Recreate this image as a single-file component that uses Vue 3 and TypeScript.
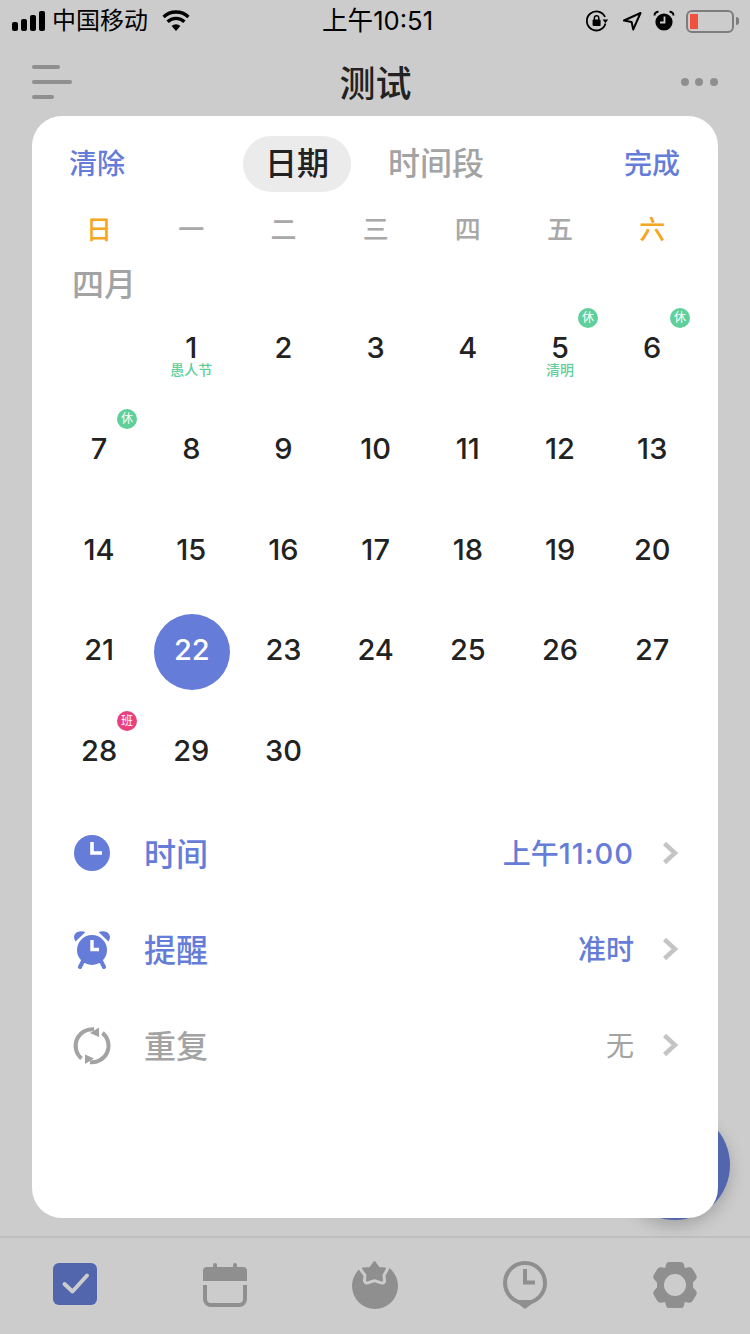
<script setup lang="ts">
interface Day {
  n: number;
  note?: string;
  badge?: "休" | "班";
}

const weekdays = ["日", "一", "二", "三", "四", "五", "六"];

const notes: Record<number, string> = { 1: "愚人节", 5: "清明" };
const badges: Record<number, "休" | "班"> = { 5: "休", 6: "休", 7: "休", 28: "班" };

const days: Day[] = [];
for (let n = 1; n <= 30; n++) {
  days.push({ n, note: notes[n], badge: badges[n] });
}

const selected = 22;
</script>

<template>
  <div class="page">
    <!-- status bar -->
    <div class="status">
      <div class="status-left">
        <div class="signal"><i class="b1"></i><i class="b2"></i><i class="b3"></i><i class="b4"></i></div>
        <span class="carrier">中国移动</span>
        <svg class="wifi" width="28" height="22" viewBox="0 0 28 22">
          <path d="M14 21l-4.4-5a6.4 6.4 0 0 1 8.8 0z" fill="#000" />
          <path d="M5.6 11.8a12 12 0 0 1 16.8 0M1.6 7a18 18 0 0 1 24.8 0" fill="none" stroke="#000" stroke-width="3.4" />
        </svg>
      </div>
      <div class="clock">上午10:51</div>
      <div class="status-right">
        <svg width="24" height="24" viewBox="0 0 24 24">
          <path d="M20.5 14.5A9.5 9.5 0 1 1 20 8" fill="none" stroke="#000" stroke-width="1.8" />
          <path d="M17.6 10.6h5.6l-2.8 3.6z" fill="#000" />
          <rect x="7.6" y="10.6" width="8" height="6.4" rx="1" fill="#000" />
          <path d="M9.4 11V9a2.2 2.2 0 0 1 4.4 0v2" fill="none" stroke="#000" stroke-width="1.5" />
        </svg>
        <svg class="loc" width="20" height="20" viewBox="0 0 20 20">
          <path d="M18.5 2L2 9.5l7.6 1.4 1.6 7.6z" fill="none" stroke="#000" stroke-width="2" stroke-linejoin="round" />
        </svg>
        <svg class="alarm" width="22" height="22" viewBox="0 0 22 22">
          <circle cx="11" cy="12" r="8.6" fill="#000" />
          <path d="M1.5 5.5A4 4 0 0 1 5.5 1.8M20.5 5.5A4 4 0 0 0 16.5 1.8" fill="none" stroke="#000" stroke-width="2" />
          <path d="M11.5 6.5v6H7" fill="none" stroke="#ccc" stroke-width="1.8" />
        </svg>
        <div class="battery"><div class="level"></div></div>
        <div class="nub"></div>
      </div>
    </div>

    <!-- nav -->
    <div class="nav">
      <div class="menu"><i class="m1"></i><i class="m2"></i><i class="m3"></i></div>
      <div class="title">测试</div>
      <div class="more"><i></i><i></i><i></i></div>
    </div>

    <!-- date picker card -->
    <div class="card">
      <div class="head">
        <span class="link">清除</span>
        <div class="tabs">
          <span class="tab active">日期</span>
          <span class="tab">时间段</span>
        </div>
        <span class="link">完成</span>
      </div>

      <div class="week">
        <span v-for="(w, i) in weekdays" :key="w" :class="{ weekend: i === 0 || i === 6 }">{{ w }}</span>
      </div>

      <div class="month">四月</div>

      <div class="grid">
        <!-- 4月1日是周一 -->
        <div class="cell"></div>
        <div v-for="d in days" :key="d.n" class="cell">
          <div class="num" :class="{ selected: d.n === selected }">{{ d.n }}</div>
          <span v-if="d.note" class="note">{{ d.note }}</span>
          <span v-if="d.badge" class="badge" :class="{ work: d.badge === '班' }">{{ d.badge }}</span>
        </div>
      </div>

      <div class="options">
        <div class="row blue">
          <svg class="row-icon" width="40" height="40" viewBox="0 0 40 40">
            <circle cx="20" cy="20" r="18" fill="#657cd8" />
            <path d="M20 9v11h10" fill="none" stroke="#fff" stroke-width="3.6" />
          </svg>
          <span class="label">时间</span>
          <span class="value">上午<span class="digits">11:00</span></span>
          <svg class="chev" width="16" height="24" viewBox="0 0 16 24"><path d="M2.5 2.5L13 12 2.5 21.5" fill="none" stroke="#c4c4c4" stroke-width="4.4" /></svg>
        </div>
        <div class="row blue">
          <svg class="row-icon" width="40" height="40" viewBox="0 0 40 40">
            <circle cx="20" cy="21" r="15" fill="#657cd8" />
            <path d="M3.500 12.500C-.5 7 4 0 13.500 3zM36.500 12.500C40.500 7 36 0 26.500 3z" fill="#657cd8" />
            <path d="M11 32l-3 6M29 32l3 6" stroke="#657cd8" stroke-width="4" stroke-linecap="round" />
            <path d="M20 11v9.500h7" fill="none" stroke="#fff" stroke-width="3.400" />
          </svg>
          <span class="label">提醒</span>
          <span class="value">准时</span>
          <svg class="chev" width="16" height="24" viewBox="0 0 16 24"><path d="M2.5 2.5L13 12 2.5 21.5" fill="none" stroke="#c4c4c4" stroke-width="4.4" /></svg>
        </div>
        <div class="row gray">
          <svg class="row-icon" width="40" height="40" viewBox="0 0 40 40">
            <path d="M22 4.300A16.600 16.600 0 0 0 9.500 33.500M30.500 7.900A16.600 16.600 0 0 1 18 37.200" fill="none" stroke="#a3a3a3" stroke-width="4" />
            <path d="M27 2.500V12l-9-4zM13 38.900v-9.500l9 4z" fill="#a3a3a3" />
          </svg>
          <span class="label">重复</span>
          <span class="value">无</span>
          <svg class="chev" width="16" height="24" viewBox="0 0 16 24"><path d="M2.5 2.5L13 12 2.5 21.5" fill="none" stroke="#c4c4c4" stroke-width="4.4" /></svg>
        </div>
      </div>
    </div>

    <div class="fab"></div>

    <!-- tab bar -->
    <div class="tabbar">
      <div class="tabbar-item">
        <svg width="50" height="50" viewBox="0 0 50 50">
          <rect x="3" y="3" width="44" height="42" rx="6" fill="#5266ae" />
          <path d="M14.500 24l8 7.500 14.500-16" fill="none" stroke="#ccc" stroke-width="4" stroke-linecap="round" stroke-linejoin="round" />
        </svg>
      </div>
      <div class="tabbar-item">
        <svg width="50" height="50" viewBox="0 0 50 50">
          <path d="M3 21V11a4 4 0 0 1 4-4h6V5a2 2 0 0 1 4 0v2h16V5a2 2 0 0 1 4 0v2h6a4 4 0 0 1 4 4v10z" fill="#8f8f8f" />
          <path d="M5 25v14a6 6 0 0 0 6 6h28a6 6 0 0 0 6-6V25" fill="none" stroke="#8f8f8f" stroke-width="4" />
        </svg>
      </div>
      <div class="tabbar-item">
        <svg width="50" height="52" viewBox="0 0 50 52">
          <circle cx="25" cy="26" r="23" fill="#8f8f8f" />
          <path d="M12 0h26v11H12z" fill="#ccc" />
          <path d="M24.500 2L29 8l6 .5-3.500 6 .5 6-7.500-2.500L17 20.500l.5-6L13 8.500 20 8z" fill="#ccc" stroke="#ccc" stroke-width="8" stroke-linejoin="round" />
          <path d="M24.500 2L29 8l6 .5-3.500 6 .5 6-7.500-2.500L17 20.500l.5-6L13 8.500 20 8z" fill="#8f8f8f" stroke="#8f8f8f" stroke-width="2" stroke-linejoin="round" />
        </svg>
      </div>
      <div class="tabbar-item">
        <svg width="50" height="52" viewBox="0 0 50 52">
          <circle cx="25" cy="23" r="20" fill="none" stroke="#8f8f8f" stroke-width="4" />
          <path d="M25 49l-12-9h24z" fill="#8f8f8f" />
          <path d="M25 9v13.500h10" fill="none" stroke="#8f8f8f" stroke-width="4" />
        </svg>
      </div>
      <div class="tabbar-item">
        <svg width="50" height="50" viewBox="0 0 50 50">
          <path fill="#8f8f8f" fill-rule="evenodd" d="M19 2h12a3 3 0 0 1 3 2.500l.8 3.500 4-.8a4 4 0 0 1 4 2l3.400 5.800a4 4 0 0 1-.5 4.500l-2.700 3v5l2.700 3a4 4 0 0 1 .5 4.500l-3.400 5.800a4 4 0 0 1-4 2l-4-.8-.8 3.500a3 3 0 0 1-3 2.500H19a3 3 0 0 1-3-2.500l-.8-3.500-4 .8a4 4 0 0 1-4-2l-3.400-5.800a4 4 0 0 1 .5-4.500l2.700-3v-5l-2.700-3a4 4 0 0 1-.5-4.500l3.400-5.800a4 4 0 0 1 4-2l4 .8.800-3.500A3 3 0 0 1 19 2zM25 14a11 11 0 1 0 0 22 11 11 0 0 0 0-22z" />
        </svg>
      </div>
    </div>
  </div>
</template>

<style>
html,
body {
  margin: 0;
  background: #ccc;
}
</style>

<style scoped>
.page {
  position: relative;
  width: 750px;
  height: 1334px;
  overflow: hidden;
  background: #ccc;
  font-family: "Inter", "Noto Sans CJK SC", sans-serif;
  color: #222;
}

.status {
  height: 40px;
  display: grid;
  grid-template-columns: 1fr auto 1fr;
  align-items: center;
  padding: 0 11px 0 12px;
  color: #000;
}

.status-left,
.status-right {
  display: flex;
  align-items: center;
}

.status-right {
  justify-content: flex-end;
}

.signal {
  display: flex;
  align-items: flex-end;
  gap: 3px;
  height: 20px;
}

.signal i {
  width: 6px;
  background: #000;
  border-radius: 2px;
}

.b1 { height: 9px; }
.b2 { height: 12px; }
.b3 { height: 16px; }
.b4 { height: 20px; }

.carrier {
  margin-left: 7px;
  font-size: 24px;
  line-height: 40px;
}

.wifi {
  margin-left: 14px;
}

.clock {
  margin-left: 4px;
  font-size: 25.6px;
  line-height: 42px;
}

.loc {
  margin-left: 13px;
}

.alarm {
  margin-left: 11px;
}

.battery {
  margin-left: 11px;
  width: 48px;
  height: 23px;
  box-sizing: border-box;
  border: 2px solid #7d7d7d;
  border-radius: 6px;
  padding: 2px;
}

.level {
  width: 8px;
  height: 100%;
  background: #f0503c;
}

.nub {
  margin-left: 2px;
  width: 3px;
  height: 8px;
  background: #7d7d7d;
  border-radius: 0 3px 3px 0;
}

.nav {
  height: 76px;
  padding: 8px 32px 0;
  display: flex;
  align-items: center;
  justify-content: space-between;
  box-sizing: border-box;
}

.menu {
  width: 40px;
  display: flex;
  flex-direction: column;
  gap: 11px;
}

.menu i {
  height: 4px;
  background: #8f8f8f;
  border-radius: 2px;
}

.m1 { width: 28px; }
.m2 { width: 40px; }
.m3 { width: 22px; }

.title {
  margin: 4px 2px 0 0;
  font-size: 36px;
  font-weight: 500;
  line-height: 56px;
}

.more {
  display: flex;
  gap: 6.5px;
}

.more i {
  width: 8px;
  height: 8px;
  border-radius: 50%;
  background: #8f8f8f;
}

.card {
  position: relative;
  z-index: 2;
  margin: 0 32px;
  height: 1102px;
  box-sizing: border-box;
  padding-top: 20px;
  background: #fff;
  border-radius: 30px;
}

.head {
  height: 56px;
  padding: 0 38px 0 37px;
  display: flex;
  align-items: center;
  justify-content: space-between;
}

.link {
  padding-bottom: 5px;
  font-size: 28px;
  font-weight: 500;
  color: #657cd8;
}

.tabs {
  display: flex;
  align-items: center;
  gap: 37px;
  margin-right: 22px;
}

.tab {
  font-size: 32px;
  font-weight: 500;
  line-height: 56px;
  color: #a3a3a3;
}

.tab.active {
  width: 108px;
  height: 56px;
  text-align: center;
  background: #ebebeb;
  border-radius: 28px;
  color: #222;
}

.week,
.grid {
  display: grid;
  grid-template-columns: repeat(7, 92.2px);
  margin-left: 21px;
}

.week {
  margin-top: 15px;
  height: 40px;
  align-items: center;
  text-align: center;
  font-size: 26px;
  font-weight: 500;
  color: #a8a8a8;
}

.weekend {
  color: #f5a623;
}

.month {
  margin: 18px 0 0 40px;
  height: 40px;
  line-height: 40px;
  font-size: 32px;
  font-weight: 500;
  color: #a3a3a3;
}

.grid {
  grid-auto-rows: 100.7px;
  margin-top: -7px;
}

.cell {
  position: relative;
  display: flex;
  align-items: center;
  justify-content: center;
}

.num {
  font-size: 29px;
  font-weight: 500;
  line-height: 28px;
}

.num.selected {
  width: 76px;
  height: 76px;
  line-height: 72px;
  text-align: center;
  border-radius: 50%;
  background: #657cd8;
  color: #fff;
  margin: 4px 0 0 1px;
}

.note {
  position: absolute;
  left: 0;
  right: 0;
  top: 63px;
  text-align: center;
  font-size: 14px;
  font-weight: 500;
  line-height: 18px;
  color: #5fcf9b;
}

.badge {
  position: absolute;
  left: 64px;
  top: 10px;
  width: 20px;
  height: 20px;
  border-radius: 50%;
  background: #5fcf9b;
  color: #fff;
  font-size: 12px;
  line-height: 20px;
  text-align: center;
}

.badge.work {
  background: #ea4080;
}

.options {
  margin-top: 4px;
}

.row {
  height: 96px;
  padding: 0 40px;
  display: flex;
  align-items: center;
}

.row-icon {
  flex: none;
}

.label {
  margin-left: 32px;
  padding-bottom: 3px;
  font-size: 32px;
  font-weight: 500;
}

.value {
  margin-left: auto;
  padding-bottom: 2px;
  font-size: 28px;
  font-weight: 500;
}

.digits {
  font-size: 29px;
  letter-spacing: 1px;
}

.chev {
  margin-left: 28px;
}

.blue .label,
.blue .value {
  color: #657cd8;
}

.gray .label,
.gray .value {
  color: #a3a3a3;
}

.gray .value {
  font-weight: 400;
}

.fab {
  position: absolute;
  left: 620px;
  top: 1110px;
  width: 110px;
  height: 110px;
  border-radius: 50%;
  background: #5266ae;
  box-shadow: 0 6px 16px rgba(0, 0, 0, 0.2);
}

.tabbar {
  margin-top: 18px;
  height: 98px;
  box-sizing: border-box;
  border-top: 2px solid #bfbfbf;
  display: flex;
}

.tabbar-item {
  flex: 1;
  display: flex;
  justify-content: center;
  padding-top: 22px;
}
</style>
